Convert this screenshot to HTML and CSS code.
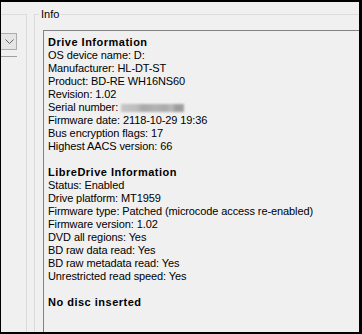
FILE: index.html
```html
<!DOCTYPE html>
<html>

<head>
  <title>LibreDrive Info</title>
  <meta charset="UTF-8">
  <link rel="stylesheet" href="styles.css">
</head>

<body>
  <div class="window">
    <div class="side-group">
      <div class="combo">
        <svg class="chevron" width="9" height="5" viewBox="0 0 9 5">
          <path d="M0.5 0.5 L4.5 4.5 L8.5 0.5" fill="none" stroke="#606060" stroke-width="1"/>
        </svg>
      </div>
      <div class="side-rule"></div>
    </div>

    <fieldset class="info-group">
      <legend>Info</legend>
      <div class="info-box">
        <div class="heading">Drive Information</div>
        <div>OS device name: D:</div>
        <div>Manufacturer: HL-DT-ST</div>
        <div>Product: BD-RE WH16NS60</div>
        <div>Revision: 1.02</div>
        <div>Serial number: <span class="redacted"></span></div>
        <div>Firmware date: 2118-10-29 19:36</div>
        <div>Bus encryption flags: 17</div>
        <div>Highest AACS version: 66</div>
        <div class="blank"></div>
        <div class="heading">LibreDrive Information</div>
        <div>Status: Enabled</div>
        <div>Drive platform: MT1959</div>
        <div>Firmware type: Patched (microcode access re-enabled)</div>
        <div>Firmware version: 1.02</div>
        <div>DVD all regions: Yes</div>
        <div>BD raw data read: Yes</div>
        <div>BD raw metadata read: Yes</div>
        <div>Unrestricted read speed: Yes</div>
        <div class="blank"></div>
        <div class="heading">No disc inserted</div>
      </div>
    </fieldset>
  </div>
</body>
</html>
```

FILE: styles.css
```css
*{
  box-sizing:border-box;
}

html,
body{
  margin:0;
  height:100%;
  background:#000;
}

body{
  padding:2px 3px 2px 1px;
  font-family:"Liberation Sans", Arial, sans-serif;
  font-size:11px;
  line-height:13px;
  color:#000;
}

.window{
  height:100%;
  background:#f0f0f0;
  display:flex;
  overflow:hidden;
}

/* left panel, mostly cut off */
.side-group{
  flex:0 0 26px;
  margin-top:12px;
  border-top:1px solid #dcdcdc;
  border-right:1px solid #dcdcdc;
  padding-top:18px;
}
.combo{
  width:16px;
  height:17px;
  background:#e5e5e5;
  border:1px solid #adadad;
  border-left:none;
  display:flex;
  align-items:center;
  justify-content:center;
  padding-left:1px;
}
.side-rule{
  width:16px;
  margin-top:6px;
  border-top:1px solid #a0a0a0;
}

.info-group{
  flex:1;
  min-width:0;
  margin:6px 0 0 7px;
  padding:0;
  border:none;
  border-top:1px solid #dcdcdc;
  border-left:1px solid #dcdcdc;
  display:flex;
  flex-direction:column;
}
.info-group legend{
  margin-left:4px;
  padding:0 2px;
}

.info-box{
  flex:1;
  margin:9px 0 0 8px;
  padding:5px 0 0 4px;
  border-top:1px solid #828282;
  border-left:1px solid #828282;
  white-space:nowrap;
  letter-spacing:-0.1px;
}
.info-box div{
  height:13px;
}
.heading{
  font-weight:bold;
  letter-spacing:0.5px;
}
.redacted{
  display:inline-block;
  width:63px;
  height:8px;
  vertical-align:-1px;
  background:linear-gradient(to right, #c6c6c6 0%, #bdbdbd 25%, #a9a9a9 35%, #b4b4b4 55%, #aaaaaa 70%, #bababa 80%, #9c9c9c 88%, #a2a2a2 100%);
  filter:blur(0.8px);
}
```
